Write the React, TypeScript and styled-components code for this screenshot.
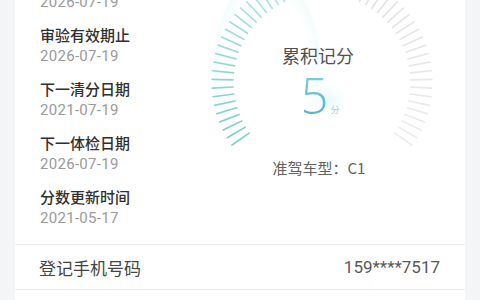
import React from 'react';
import styled, { createGlobalStyle } from 'styled-components';

const GlobalStyle = createGlobalStyle`
  html, body {
    margin: 0;
    padding: 0;
    background: #f4f5f7;
    font-family: "Noto Sans CJK SC", "Noto Sans", sans-serif;
    overflow: hidden;
  }
`;

const Page = styled.div`
  height: 300px;
  padding: 0 15px;
  overflow: hidden;
`;

const Card = styled.div`
  background: #ffffff;
  min-height: 340px;
  margin-top: -29px;
`;

const InfoSection = styled.div`
  display: flex;
  padding: 0 0 16px 25px;
`;

const InfoList = styled.div`
  width: 152px;
  display: flex;
  flex-direction: column;
  gap: 13px;
`;

const Item = styled.div`
  display: flex;
  flex-direction: column;
  gap: 1px;
`;

const Label = styled.div`
  font-size: 15px;
  line-height: 20px;
  color: #2f2f2f;
  font-weight: 500;
  white-space: nowrap;
`;

const DateText = styled.div`
  font-family: Roboto, "Noto Sans", sans-serif;
  font-size: 15px;
  line-height: 20px;
  letter-spacing: 0.3px;
  color: #9a9a9a;
`;

const Gauge = styled.div`
  position: relative;
  width: 260px;
  height: 215px;
  display: flex;
  flex-direction: column;
  align-items: center;
  padding-top: 72px;
  box-sizing: border-box;
`;

const Dial = styled.svg`
  position: absolute;
  left: 0;
  top: 0;
`;

const GaugeTitle = styled.div`
  position: relative;
  font-size: 18px;
  line-height: 24px;
  color: #505050;
  margin-left: -8px;
`;

const Score = styled.div`
  position: relative;
  display: flex;
  align-items: flex-end;
  margin-top: 4px;
  margin-left: -4px;
  height: 49px;
`;

const ScoreValue = styled.span`
  font-family: "Open Sans", Roboto, sans-serif;
  font-weight: 300;
  font-size: 49px;
  line-height: 49px;
  background: linear-gradient(180deg, #7fd0dd 0%, #4fb0c6 100%);
  -webkit-background-clip: text;
  background-clip: text;
  color: transparent;
`;

const ScoreUnit = styled.span`
  font-size: 9px;
  line-height: 12px;
  color: #9fd6dc;
  margin: 0 0 4px 2px;
`;

const CarType = styled.div`
  position: relative;
  margin-top: 38px;
  margin-left: -6px;
  font-size: 15px;
  line-height: 20px;
  color: #616161;
`;

const Row = styled.div`
  display: flex;
  align-items: center;
  justify-content: space-between;
  height: 46px;
  box-sizing: border-box;
  border-top: 1px solid #ececec;
  border-bottom: 1px solid #ececec;
  padding: 0 25px 0 24px;
`;

const RowLabel = styled.span`
  font-size: 17px;
  color: #444444;
`;

const RowValue = styled.span`
  font-family: Roboto, "Noto Sans", sans-serif;
  font-size: 17px;
  color: #585858;
`;

const items = [
  { label: '审验日期', date: '2026-07-19' },
  { label: '审验有效期止', date: '2026-07-19' },
  { label: '下一清分日期', date: '2021-07-19' },
  { label: '下一体检日期', date: '2026-07-19' },
  { label: '分数更新时间', date: '2021-05-17' },
];

const mix = (a: number[], b: number[], t: number) =>
  `rgb(${a.map((v, i) => Math.round(v + (b[i] - v) * t)).join(',')})`;

function DialTicks() {
  const cx = 130;
  const cy = 111;
  const rOut = 110;
  const rIn = 89;
  const count = 56;
  const span = 250;
  const split = 0.47;
  const ticks = [];
  for (let i = 0; i < count; i++) {
    const t = i / (count - 1);
    const deg = -span / 2 + t * span;
    const a = (deg * Math.PI) / 180;
    const s = Math.sin(a);
    const c = Math.cos(a);
    let color: string;
    if (t <= split) {
      color = mix([128, 204, 198], [178, 234, 238], t / split);
    } else {
      color = mix([222, 222, 222], [236, 236, 236], (t - split) / (1 - split));
    }
    ticks.push(
      <line
        key={i}
        x1={cx + rIn * s}
        y1={cy - rIn * c}
        x2={cx + rOut * s}
        y2={cy - rOut * c}
        stroke={color}
        strokeWidth={1.6}
        strokeLinecap="round"
      />
    );
  }
  return (
    <Dial width={260} height={215} viewBox="0 0 260 215">
      <defs>
        <radialGradient id="glow" cx="0.5" cy="0.5" r="0.5">
          <stop offset="0" stopColor="#e3f7f8" stopOpacity="0.9" />
          <stop offset="1" stopColor="#ffffff" stopOpacity="0" />
        </radialGradient>
        <radialGradient id="rim" cx="0.5" cy="0.5" r="0.5">
          <stop offset="0.72" stopColor="#ffffff" stopOpacity="0" />
          <stop offset="0.95" stopColor="#e6f8f8" stopOpacity="0.8" />
          <stop offset="1" stopColor="#ffffff" stopOpacity="0" />
        </radialGradient>
      </defs>
      <ellipse cx={135} cy={128} rx={26} ry={20} fill="url(#glow)" />
      <path
        d={`M ${cx} ${cy} L ${cx - 110} ${cy + 80} L ${cx - 110} ${cy - 110} L ${cx} ${cy - 110} Z`}
        fill="url(#rim)"
        opacity={0.6}
      />
      {ticks}
    </Dial>
  );
}

export default function App() {
  return (
    <>
      <GlobalStyle />
      <Page>
        <Card>
          <InfoSection>
            <InfoList>
              {items.map((it) => (
                <Item key={it.label}>
                  <Label>{it.label}</Label>
                  <DateText>{it.date}</DateText>
                </Item>
              ))}
            </InfoList>
            <Gauge>
              <DialTicks />
              <GaugeTitle>累积记分</GaugeTitle>
              <Score>
                <ScoreValue>5</ScoreValue>
                <ScoreUnit>分</ScoreUnit>
              </Score>
              <CarType>准驾车型：C1</CarType>
            </Gauge>
          </InfoSection>
          <Row>
            <RowLabel>登记手机号码</RowLabel>
            <RowValue>159****7517</RowValue>
          </Row>
        </Card>
      </Page>
    </>
  );
}
